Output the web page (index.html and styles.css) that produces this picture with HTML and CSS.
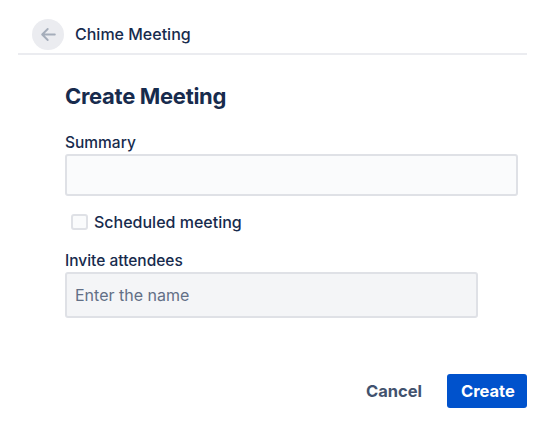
FILE: index.html
```html
<!DOCTYPE html>
<html>
<head>
<meta charset="utf-8">
<link rel="stylesheet" href="styles.css">
</head>
<body>
<div class="header">
  <button class="back" aria-label="Back">
    <svg width="19" height="19" viewBox="0 0 24 24"><path d="M20 12H5M11 5l-7 7 7 7" fill="none" stroke="#A5ADBA" stroke-width="2.4" stroke-linecap="round" stroke-linejoin="round"/></svg>
  </button>
  <span class="title">Chime Meeting</span>
</div>
<div class="form">
  <h1 class="heading">Create Meeting</h1>
  <label class="label">Summary</label>
  <div class="input summary"></div>
  <div class="check-row">
    <span class="checkbox"></span>
    <span class="check-label">Scheduled meeting</span>
  </div>
  <label class="label">Invite attendees</label>
  <div class="input invite"><span class="placeholder">Enter the name</span></div>
  <div class="actions">
    <button class="btn cancel">Cancel</button>
    <button class="btn create">Create</button>
  </div>
</div>
</body>
</html>
```
FILE: styles.css
```css
* { box-sizing: border-box; }
body {
  margin: 0;
  background: #fff;
  font-family: Inter, "Noto Sans", sans-serif;
  color: #172B4D;
}
.header {
  margin: 0 31px 0 18px;
  height: 55px;
  padding: 0 0 3px 14px;
  display: flex;
  align-items: flex-end;
  gap: 11px;
  border-bottom: 2px solid #EBECF0;
}
.back {
  width: 32px;
  height: 31px;
  border-radius: 50%;
  border: none;
  background: #EBECF0;
  display: flex;
  align-items: center;
  justify-content: center;
  padding: 0;
}
.title {
  font-size: 16px;
  font-weight: 500;
  line-height: 31px;
  color: #172B4D;
}
.form {
  padding: 0 31px 0 65px;
  display: flex;
  flex-direction: column;
}
.heading {
  margin: 25px 0 0;
  font-size: 22px;
  font-weight: 700;
  line-height: 32px;
  letter-spacing: -0.3px;
}
.label {
  margin-top: 21px;
  font-size: 15.5px;
  line-height: 20px;
  font-weight: 500;
}
.input {
  margin-top: 1px;
  border: 2px solid #DFE1E6;
  border-radius: 3px;
  display: flex;
  align-items: center;
  padding: 0 8px;
}
.summary {
  width: 453px;
  height: 42px;
  background: #FAFBFC;
}
.invite {
  width: 413px;
  height: 46px;
  background: #F4F5F7;
  margin-top: 1px;
}
.placeholder {
  font-size: 16px;
  color: #626F86;
}
.check-row {
  display: flex;
  align-items: center;
  gap: 6px;
  margin: 17px 0 0 6px;
  height: 18px;
}
.check-row + .label { margin-top: 20px; }
.checkbox {
  width: 17px;
  height: 16px;
  border: 2px solid #DFE1E6;
  border-radius: 3px;
  background: #FAFBFC;
}
.check-label {
  font-size: 16px;
  font-weight: 500;
}
.actions {
  display: flex;
  justify-content: flex-end;
  align-items: center;
  gap: 25px;
  margin-top: 56px;
}
.btn {
  font-family: inherit;
  font-size: 16.5px;
  font-weight: 700;
  border: none;
  border-radius: 3px;
  height: 34px;
  padding: 0 14px;
}
.cancel {
  background: transparent;
  color: #42526E;
  padding: 0;
}
.create {
  background: #0052CC;
  color: #fff;
  width: 80px;
}
```
